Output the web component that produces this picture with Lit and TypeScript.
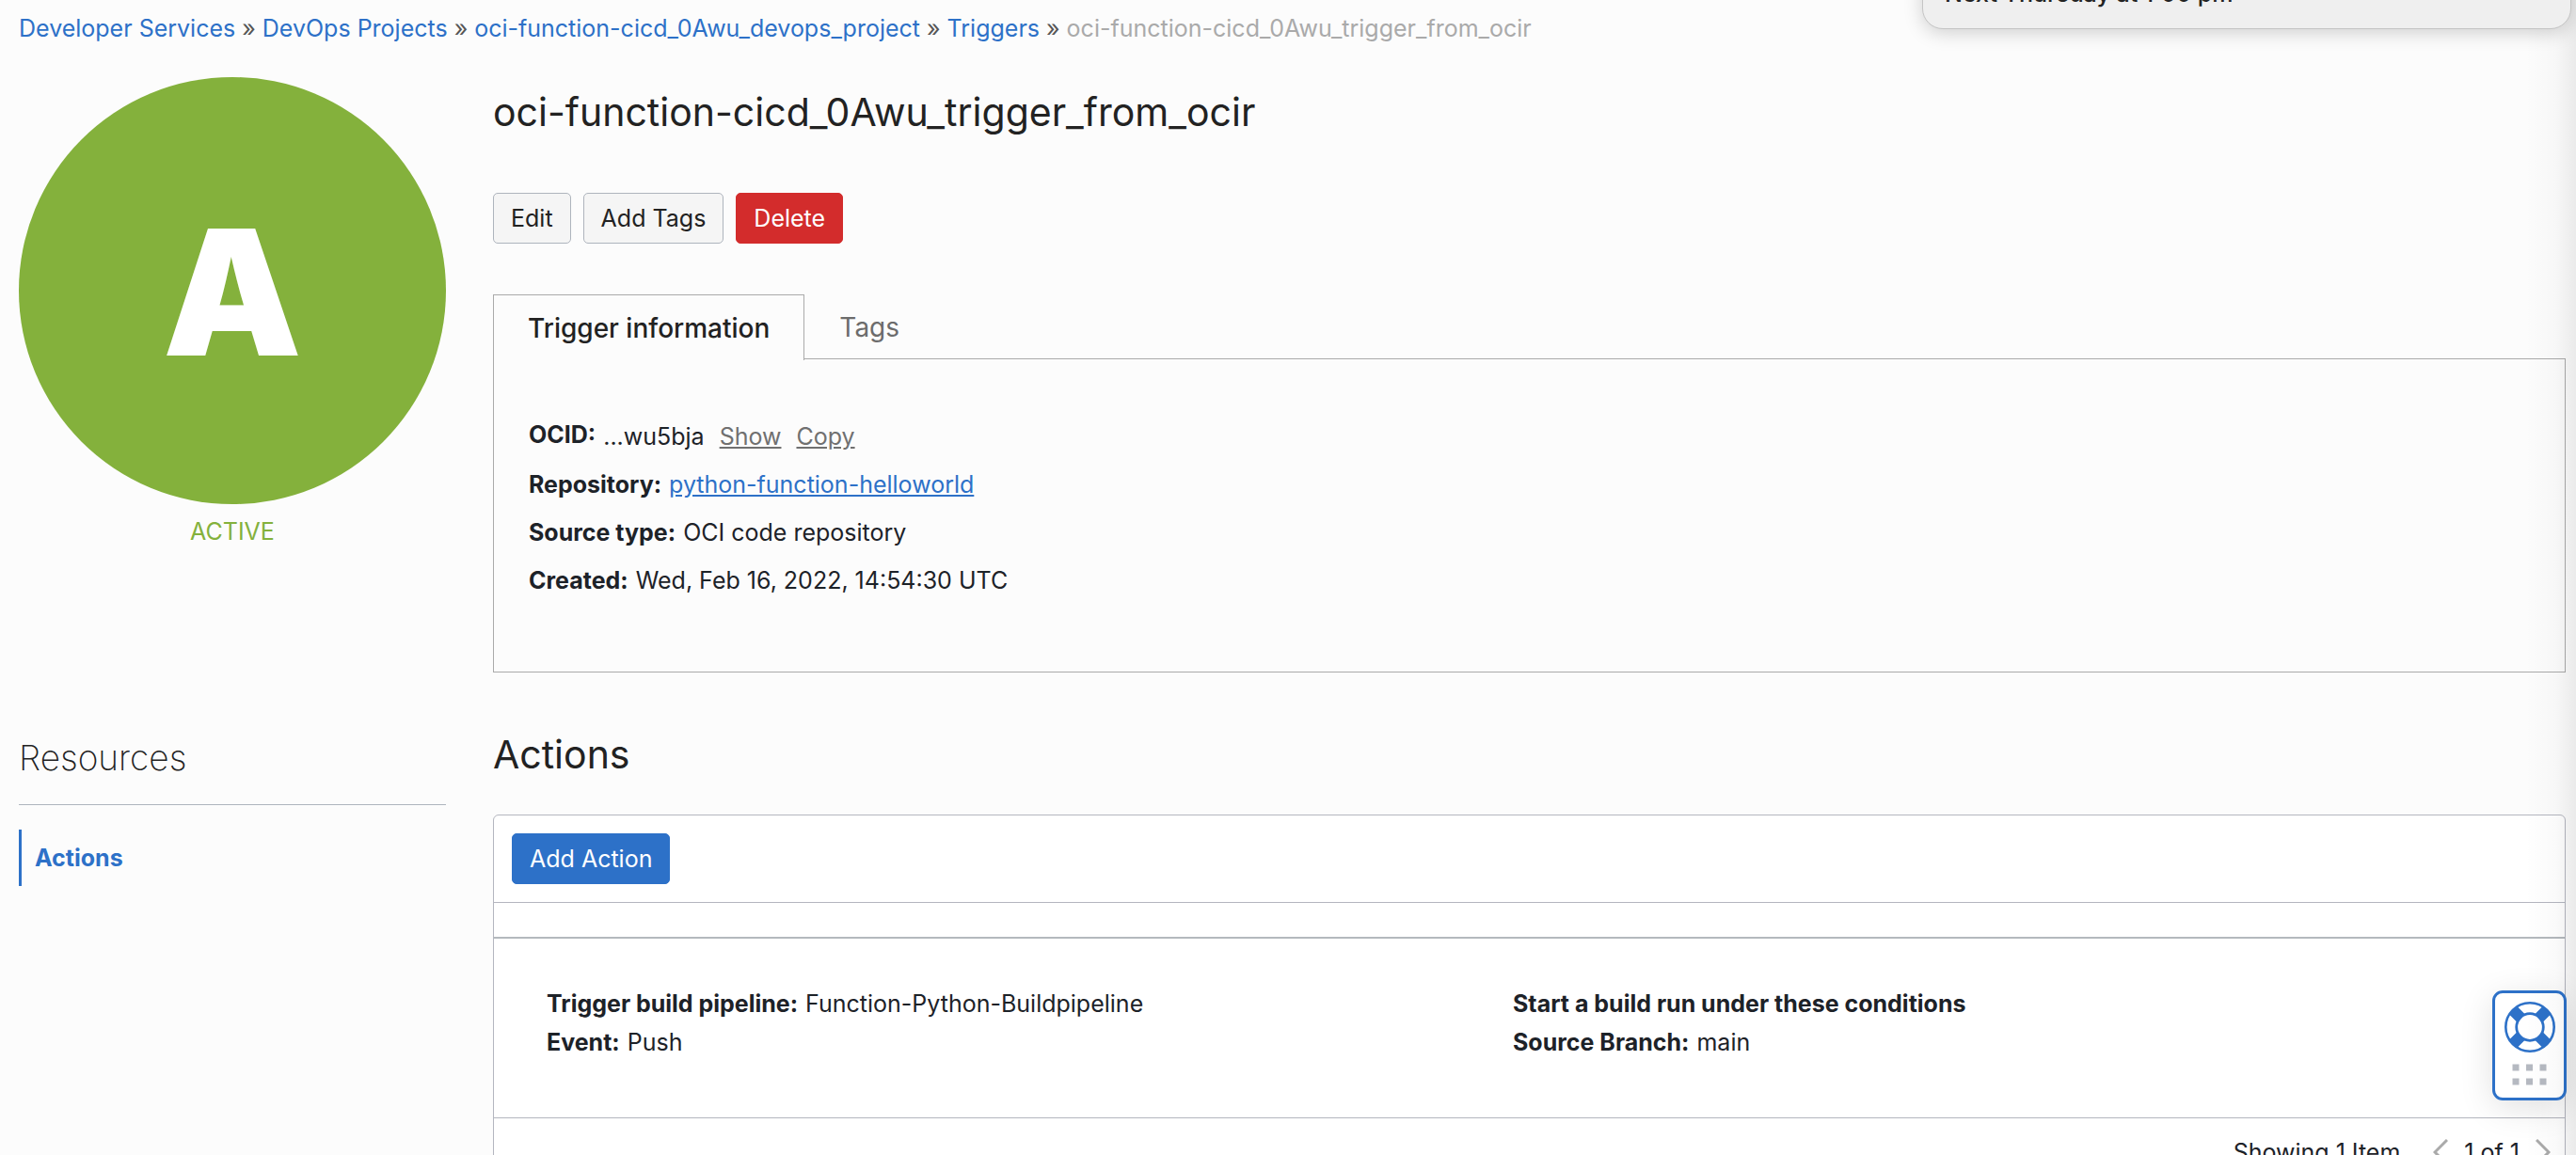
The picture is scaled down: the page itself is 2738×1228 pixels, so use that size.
import { LitElement, html, svg, css } from "lit";
import { customElement } from "lit/decorators.js";

const CRUMBS = ["Developer Services", "DevOps Projects", "oci-function-cicd_0Awu_devops_project", "Triggers"];
const RESOURCE = "oci-function-cicd_0Awu_trigger_from_ocir";

@customElement("help-widget")
export class HelpWidget extends LitElement {
  static styles = css`
    :host { display: block; }
    .help {
      display: flex;
      flex-direction: column;
      align-items: center;
      gap: 12px;
      box-sizing: border-box;
      width: 79px;
      padding: 9px 0 13px;
      border: 3px solid #2d71c8;
      border-radius: 11px;
      background: transparent;
      box-shadow: 0 8px 36px rgba(0, 0, 0, 0.12);
      cursor: pointer;
    }
    .ring, .dots { display: block; }
  `;

  render() {
    return html`
      <button class="help" aria-label="Help">
        <svg class="ring" width="54" height="54" viewBox="0 0 54 54">
          <circle cx="27" cy="27" r="20.5" fill="none" stroke="#fff" stroke-width="11" />
          <g stroke="#2d71c8" stroke-width="12">
            <path d="M9 9 L17.5 17.5 M45 9 L36.5 17.5 M9 45 L17.5 36.5 M45 45 L36.5 36.5" />
          </g>
          <circle cx="27" cy="27" r="25.7" fill="none" stroke="#2d71c8" stroke-width="2.6" />
          <circle cx="27" cy="27" r="14.3" fill="#fff" stroke="#2d71c8" stroke-width="2.8" />
        </svg>
        <svg class="dots" width="37" height="23" viewBox="0 0 37 23" fill="#b5b9c1">
          ${[0, 1].map((row) =>
            [0, 1, 2].map((col) => svg`<rect x=${col * 14.5 + 0.5} y=${row * 15 + 0.5} width="7" height="7" />`)
          )}
        </svg>
      </button>
    `;
  }
}

@customElement("app-root")
export class AppRoot extends LitElement {
  static styles = css`
    :host {
      display: block;
      position: relative;
      box-sizing: border-box;
      height: 100vh;
      overflow: hidden;
      padding: 12px 11px 0 20px;
      background: #fcfcfc;
      color: #222;
      font-family: Inter, "Liberation Sans", sans-serif;
      font-size: 25px;
      line-height: 36px;
    }
    h1, h2, p, ul, ol, dl, dd { margin: 0; padding: 0; font-weight: 400; }
    ul, ol { list-style: none; }
    a { color: #2d71c8; text-decoration: none; }
    button { font: inherit; cursor: pointer; }

    .crumbs { display: flex; color: #555; }
    .crumbs li + li::before { content: "»"; margin: 0 7px; }
    .crumbs .current { color: #aaa; }
    .crumbs .current::before { color: #555; }

    .page { display: grid; grid-template-columns: 454px minmax(0, 1fr); column-gap: 50px; }
    .side { padding-top: 34px; }
    .status {
      display: flex;
      align-items: center;
      justify-content: center;
      box-sizing: border-box;
      aspect-ratio: 1;
      padding-top: 4px;
      border-radius: 50%;
      background: #84b13c;
      color: #fff;
      font-size: 186px;
      font-weight: 900;
      line-height: 1;
    }
    .state { margin-top: 11px; text-align: center; color: #84b13c; }
    .side-title {
      margin-top: 196px;
      padding-bottom: 22px;
      border-bottom: 1px solid #aeb4bd;
      font-size: 37px;
      font-weight: 200;
      line-height: 54px;
    }
    .side-nav { margin-top: 26px; }
    .side-link {
      display: block;
      padding: 12px 14px;
      border-left: 3px solid #2d71c8;
      font-weight: 700;
    }

    .title { margin-top: 44px; font-size: 41px; line-height: 54px; }
    .actions { display: flex; gap: 13px; margin-top: 59px; }
    .btn {
      box-sizing: border-box;
      height: 54px;
      padding: 0 18px;
      border: 1px solid #aeb4bd;
      border-radius: 5px;
      background: #f5f5f5;
      color: #222;
    }
    .danger { border-color: #d32c2c; background: #d32c2c; color: #fff; }
    .primary { border-color: #2d71c8; background: #2d71c8; color: #fff; }

    .tabs { display: flex; margin-top: 54px; }
    .tab {
      box-sizing: border-box;
      height: 68px;
      padding: 0 36px;
      border: 1px solid transparent;
      border-bottom: 0;
      background: none;
      color: #6c6c6c;
      font-size: 28px;
    }
    .selected {
      position: relative;
      z-index: 1;
      height: 70px;
      margin-bottom: -2px;
      border-color: #aaa;
      background: #fcfcfc;
      color: #222;
      font-weight: 500;
    }
    .panel { border: 1px solid #aaa; padding: 62px 37px 79px; color: #1d2228; }
    .facts { display: flex; flex-direction: column; gap: 15px; }
    .fact { display: flex; gap: 8px; }
    dt { font-weight: 700; }
    .ocid { display: flex; gap: 16px; padding-top: 2px; }
    .linkish { padding: 0; border: 0; background: none; color: #707070; text-decoration: underline; }
    .repo { text-decoration: underline; }

    .section { margin-top: 60px; font-size: 41px; line-height: 54px; }
    .card {
      margin-top: 37px;
      border: 1px solid #b4b6bf;
      border-radius: 6px 6px 0 0;
      background: #fff;
      color: #1d2228;
    }
    .toolbar { padding: 19px; border-bottom: 1px solid #b4b6bf; }
    .strip { height: 36px; border-bottom: 2px solid #b4b9bd; }
    .row {
      display: grid;
      grid-template-columns: 1fr 1fr;
      padding: 51px 91px 51px 56px;
      border-bottom: 1px solid #b4b6bf;
    }
    .row .facts { gap: 5px; padding: 0 0 11px; }
    .footer {
      display: flex;
      align-items: center;
      justify-content: flex-end;
      gap: 17px;
      padding: 18px 15px;
    }
    .count { margin-right: 18px; }
    .pager { display: flex; padding: 0; border: 0; background: none; }

    .help-dock { position: absolute; top: 1053px; right: 10px; }
    .edge {
      position: absolute;
      top: 0;
      right: 0;
      bottom: 0;
      width: 54px;
      background: linear-gradient(to right, rgba(0, 0, 0, 0), rgba(0, 0, 0, 0.02) 60%, rgba(0, 0, 0, 0.07));
      pointer-events: none;
    }
    .toast {
      position: absolute;
      bottom: calc(100% - 31px);
      right: 5px;
      box-sizing: border-box;
      width: 690px;
      padding: 12px 23px 19px;
      border: 1px solid #c4c4c4;
      border-radius: 22px;
      background: #efefef;
      box-shadow: 0 4px 20px rgba(0, 0, 0, 0.18);
      color: #222;
      font-weight: 500;
    }
  `;

  private fact(label: string, value: unknown) {
    return html`<div class="fact"><dt>${label}</dt><dd>${value}</dd></div>`;
  }

  private chevron(points: string, label: string) {
    return html`
      <button class="pager" aria-label=${label}>
        <svg width="16" height="28" viewBox="0 0 16 28" fill="none" stroke="#aaa" stroke-width="3">
          <polyline points=${points} />
        </svg>
      </button>
    `;
  }

  render() {
    return html`
      <nav aria-label="Breadcrumb">
        <ol class="crumbs">
          ${CRUMBS.map((crumb) => html`<li><a href="#">${crumb}</a></li>`)}
          <li class="current">${RESOURCE}</li>
        </ol>
      </nav>
      <div class="page">
        <aside class="side">
          <div class="status">A</div>
          <p class="state">ACTIVE</p>
          <h2 class="side-title">Resources</h2>
          <ul class="side-nav">
            <li><a class="side-link" href="#actions">Actions</a></li>
          </ul>
        </aside>
        <main>
          <h1 class="title">${RESOURCE}</h1>
          <div class="actions">
            <button class="btn">Edit</button>
            <button class="btn">Add Tags</button>
            <button class="btn danger">Delete</button>
          </div>
          <div class="tabs" role="tablist">
            <button class="tab selected" role="tab" aria-selected="true">Trigger information</button>
            <button class="tab" role="tab" aria-selected="false">Tags</button>
          </div>
          <section class="panel" role="tabpanel">
            <dl class="facts">
              ${this.fact(
                "OCID:",
                html`<span class="ocid">
                  <span>...wu5bja</span>
                  <button class="linkish">Show</button>
                  <button class="linkish">Copy</button>
                </span>`
              )}
              ${this.fact("Repository:", html`<a class="repo" href="#">python-function-helloworld</a>`)}
              ${this.fact("Source type:", "OCI code repository")}
              ${this.fact("Created:", "Wed, Feb 16, 2022, 14:54:30 UTC")}
            </dl>
          </section>
          <h2 class="section" id="actions">Actions</h2>
          <section class="card">
            <div class="toolbar"><button class="btn primary">Add Action</button></div>
            <div class="strip"></div>
            <div class="row">
              <dl class="facts">
                ${this.fact("Trigger build pipeline:", "Function-Python-Buildpipeline")}
                ${this.fact("Event:", "Push")}
              </dl>
              <dl class="facts">
                <div class="fact"><dt>Start a build run under these conditions</dt></div>
                ${this.fact("Source Branch:", "main")}
              </dl>
            </div>
            <div class="footer">
              <span class="count">Showing 1 Item</span>
              ${this.chevron("15,1 2,14 15,27", "Previous page")}
              <span>1 of 1</span>
              ${this.chevron("1,1 14,14 1,27", "Next page")}
            </div>
          </section>
        </main>
      </div>
      <help-widget class="help-dock"></help-widget>
      <div class="edge"></div>
      <div class="toast" role="status">Next Thursday at 1:00 pm</div>
    `;
  }
}
